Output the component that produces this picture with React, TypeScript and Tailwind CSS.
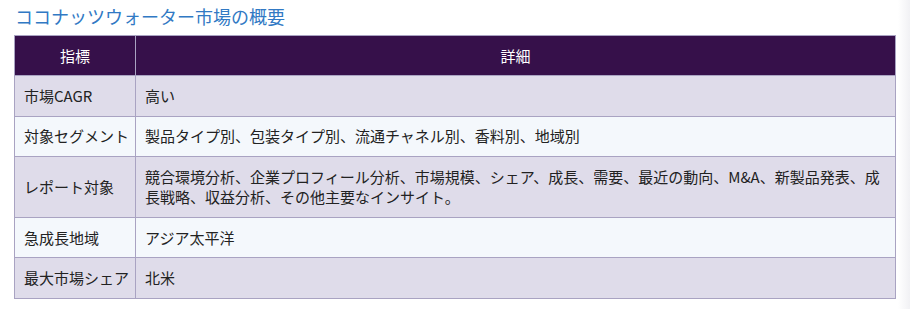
const rows: [string, string][] = [
  ["市場CAGR", "高い"],
  ["対象セグメント", "製品タイプ別、包装タイプ別、流通チャネル別、香料別、地域別"],
  [
    "レポート対象",
    "競合環境分析、企業プロフィール分析、市場規模、シェア、成長、需要、最近の動向、M&A、新製品発表、成長戦略、収益分析、その他主要なインサイト。",
  ],
  ["急成長地域", "アジア太平洋"],
  ["最大市場シェア", "北米"],
];

export default function App() {
  return (
    <div className="flex h-[309px] w-[910px] bg-white font-['Noto_Sans_CJK_JP','Noto_Sans',sans-serif]">
      <div className="flex-1 pl-[14px] pr-[2px] pt-[3px]">
        <h2 className="mb-[6px] pl-px text-[18px] leading-[26px] text-[#3179c4]">
          ココナッツウォーター市場の概要
        </h2>
        <table className="w-full border-collapse text-[15px] leading-[20px] text-[#222]">
          <thead>
            <tr className="bg-[#36104a] text-white">
              <th className="w-[120px] border border-[#a9a3c2] py-[9.5px] font-normal">指標</th>
              <th className="border border-[#a9a3c2] py-[9.5px] font-normal">詳細</th>
            </tr>
          </thead>
          <tbody>
            {rows.map(([k, v], i) => (
              <tr key={k} className={i % 2 === 0 ? "bg-[#dfdcea]" : "bg-[#f4f8fc]"}>
                <td className="border border-[#a9a3c2] pl-[9px] pr-[6px] py-[9.8px] align-middle whitespace-nowrap">{k}</td>
                <td className="border border-[#a9a3c2] pl-[9px] pr-[12px] py-[9.8px] align-middle">{v}</td>
              </tr>
            ))}
          </tbody>
        </table>
      </div>
      <div className="w-[12px] bg-gradient-to-r from-white to-[#f1f1f4]" />
    </div>
  );
}
